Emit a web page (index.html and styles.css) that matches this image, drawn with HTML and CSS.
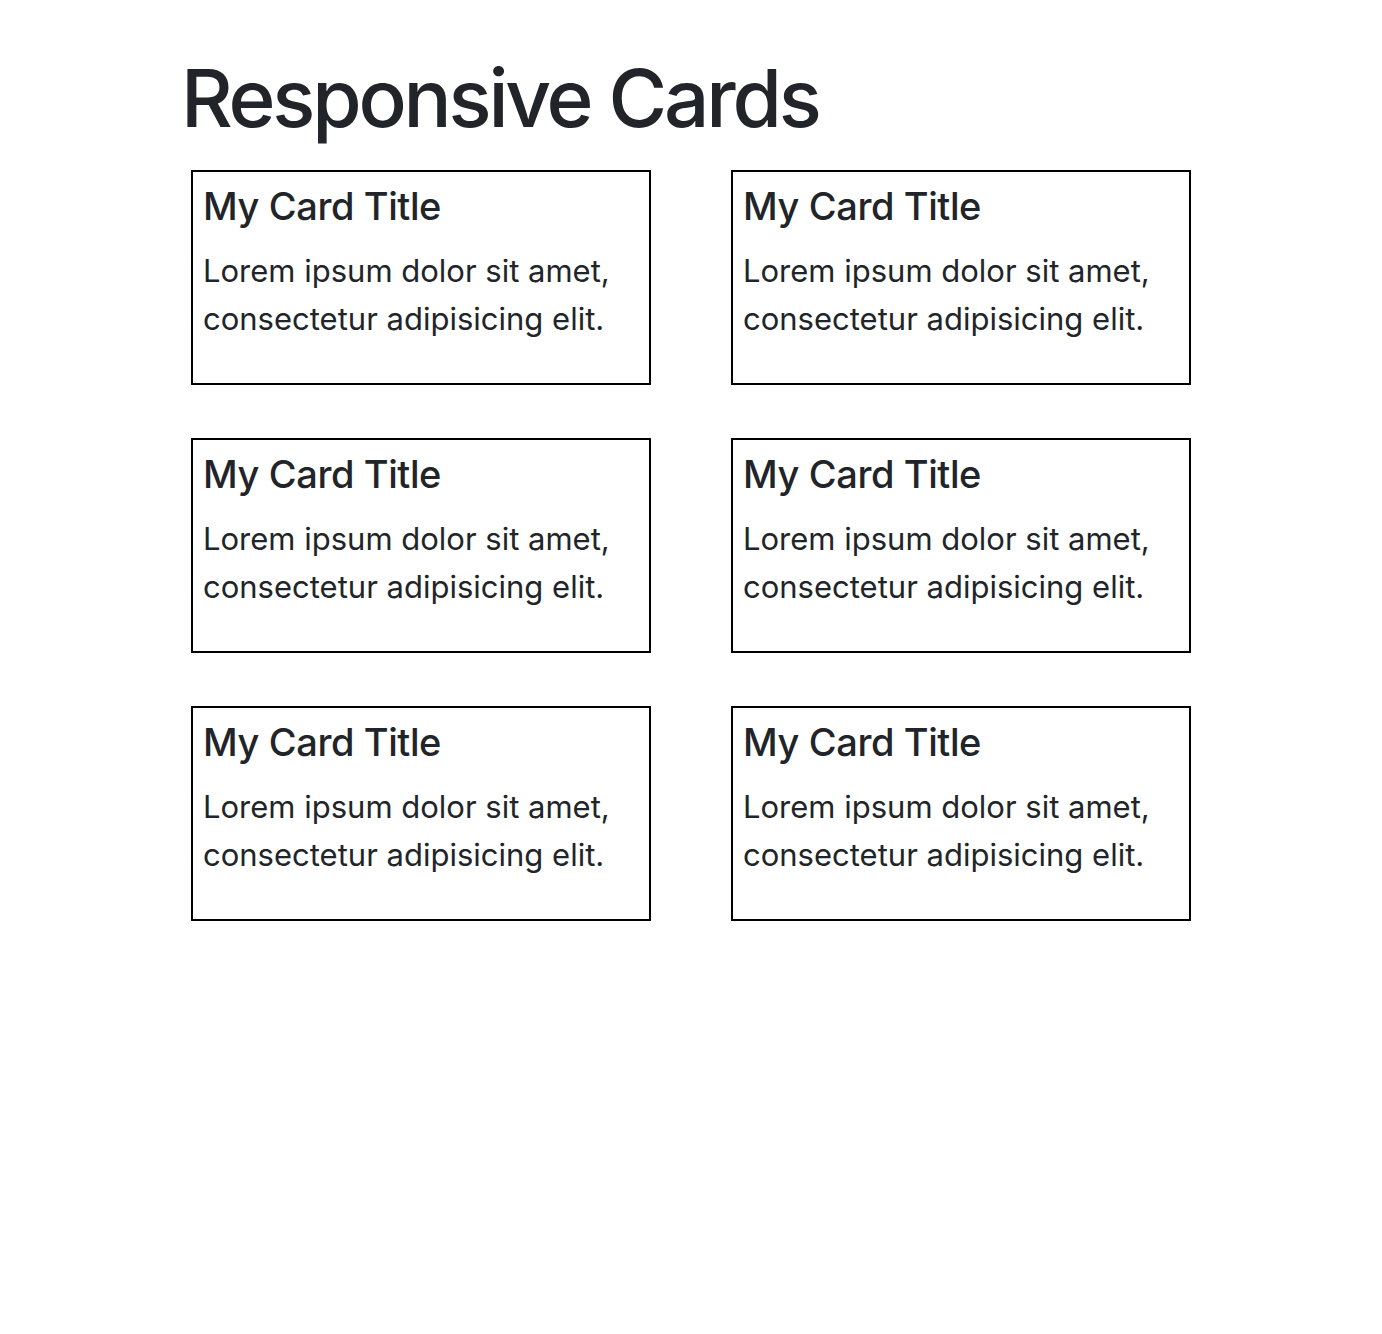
FILE: index.html
```html
<!DOCTYPE html>
<html lang="en">
<head>
<meta charset="utf-8">
<title>Responsive Cards</title>
<link rel="stylesheet" href="styles.css">
</head>
<body>
<div class="container">
  <h1 class="page-title">Responsive Cards</h1>
  <div class="cards">
    <div class="card"><h5 class="card-title">My Card Title</h5><p class="card-text">Lorem ipsum dolor sit amet, consectetur adipisicing elit.</p></div>
    <div class="card"><h5 class="card-title">My Card Title</h5><p class="card-text">Lorem ipsum dolor sit amet, consectetur adipisicing elit.</p></div>
    <div class="card"><h5 class="card-title">My Card Title</h5><p class="card-text">Lorem ipsum dolor sit amet, consectetur adipisicing elit.</p></div>
    <div class="card"><h5 class="card-title">My Card Title</h5><p class="card-text">Lorem ipsum dolor sit amet, consectetur adipisicing elit.</p></div>
    <div class="card"><h5 class="card-title">My Card Title</h5><p class="card-text">Lorem ipsum dolor sit amet, consectetur adipisicing elit.</p></div>
    <div class="card"><h5 class="card-title">My Card Title</h5><p class="card-text">Lorem ipsum dolor sit amet, consectetur adipisicing elit.</p></div>
  </div>
</div>
</body>
</html>
```
FILE: styles.css
```css
html, body {
  margin: 0;
  padding: 0;
  background: #fff;
}
body {
  font-family: Inter, "Noto Sans", "Liberation Sans", sans-serif;
  color: #212529;
}
.container {
  width: 1020px;
  margin: 0 auto;
  padding-top: 50px;
}
.page-title {
  margin: 0 0 24px 0;
  font-size: 80px;
  line-height: 96px;
  font-weight: 500;
  letter-spacing: -3.2px;
}
.cards {
  display: grid;
  grid-template-columns: 460px 460px;
  column-gap: 80px;
  row-gap: 53px;
  padding-left: 10px;
}
.card {
  border: 2px solid #000;
  padding: 10px;
  box-sizing: border-box;
  height: 215px;
}
.card-title {
  margin: 0 0 17px 0;
  font-size: 38px;
  line-height: 48px;
  font-weight: 500;
  letter-spacing: -0.4px;
}
.card-text {
  margin: 0;
  font-size: 31px;
  line-height: 48px;
  font-weight: 400;
}
```
